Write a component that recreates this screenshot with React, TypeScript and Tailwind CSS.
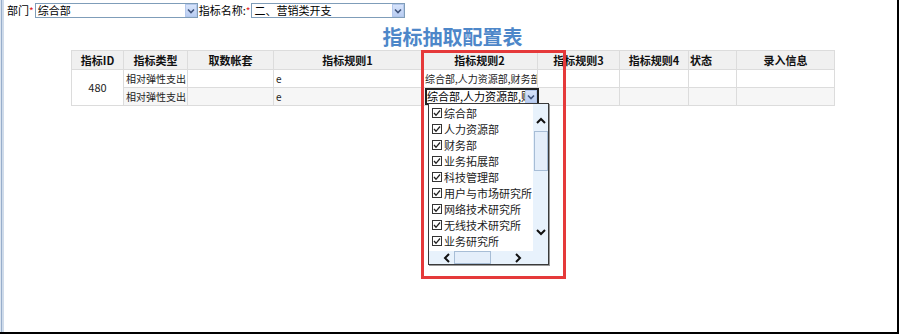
import type React from 'react';

const FONT = { fontFamily: '"Microsoft YaHei", "Noto Sans CJK SC", "Noto Sans", sans-serif' };

// 下拉箭头按钮（仿 XP 风格）
const ArrowBtn: React.FC<{ className?: string }> = ({ className = '' }) => (
  <div
    className={`flex items-center justify-center w-[12px] h-full border border-[#b4c8ec] bg-gradient-to-b from-[#d7e4fb] to-[#b9cdf2] ${className}`}
  >
    <svg width="8" height="6" viewBox="0 0 8 6">
      <polyline points="1,1.5 4,4.5 7,1.5" fill="none" stroke="#3f527a" strokeWidth="1.6" />
    </svg>
  </div>
);

const Chevron: React.FC<{ dir: 'up' | 'down' | 'left' | 'right' }> = ({ dir }) => {
  const pts = {
    up: '1,6 5,2 9,6',
    down: '1,2 5,6 9,2',
    left: '6,1 2,5 6,9',
    right: '2,1 6,5 2,9',
  }[dir];
  const vertical = dir === 'up' || dir === 'down';
  return (
    <svg width={vertical ? 10 : 8} height={vertical ? 8 : 10} viewBox={vertical ? '0 0 10 8' : '0 0 8 10'}>
      <polyline points={pts} fill="none" stroke="#111" strokeWidth="2" />
    </svg>
  );
};

const TopSelect: React.FC<{ value: string; width: string }> = ({ value, width }) => (
  <div className={`flex h-[15px] ${width} border border-[#7f9db9] bg-white`}>
    <span className="flex-1 flex items-center pl-[2px] text-[11px] leading-none text-black overflow-hidden whitespace-nowrap">
      {value}
    </span>
    <ArrowBtn />
  </div>
);

const departments = [
  '综合部',
  '人力资源部',
  '财务部',
  '业务拓展部',
  '科技管理部',
  '用户与市场研究所',
  '网络技术研究所',
  '无线技术研究所',
  '业务研究所',
];

const CheckBox: React.FC = () => (
  <div className="w-[10px] h-[10px] border border-[#333] bg-white flex items-center justify-center">
    <svg width="8" height="8" viewBox="0 0 8 8">
      <polyline points="1,4 3,6.3 7,1.5" fill="none" stroke="#222" strokeWidth="1.3" />
    </svg>
  </div>
);

// 多选下拉列表（展开状态）
const DeptDropdown: React.FC = () => (
  <div className="absolute left-[3px] top-[15px] w-[121px] h-[162px] border border-[#3a3a3a] bg-white flex flex-col shadow-[1px_1px_0_#9a9a9a] z-10">
    <div className="flex flex-1 min-h-0">
      <div className="flex-1 pt-[1px] overflow-hidden">
        {departments.map(d => (
          <div key={d} className="flex items-center h-[16px] pl-[3px] gap-[2px]">
            <CheckBox />
            <span className="text-[11px] leading-[16px] text-[#222] whitespace-nowrap">{d}</span>
          </div>
        ))}
      </div>
      <div className="w-[15px] bg-[#e8f2fc] flex flex-col items-center">
        <div className="h-[27px] w-full flex items-end justify-center pb-[6px]">
          <Chevron dir="up" />
        </div>
        <div className="h-[40px] w-[14px] border border-[#a7bdd6] bg-[#e4eefa]" />
        <div className="flex-1" />
        <div className="h-[24px] w-full flex items-center justify-center mb-[7px]">
          <Chevron dir="down" />
        </div>
      </div>
    </div>
    <div className="h-[13px] bg-[#e8f2fc] flex items-center">
      <div className="w-[14px]" />
      <Chevron dir="left" />
      <div className="ml-[3px] w-[37px] h-[13px] border border-[#a7bdd6] bg-[#e4eefa]" />
      <div className="w-[23px]" />
      <Chevron dir="right" />
    </div>
  </div>
);

const cols = [52, 64, 86, 148, 116, 82, 69, 48, 98];
const headers = ['指标ID', '指标类型', '取数帐套', '指标规则1', '指标规则2', '指标规则3', '指标规则4', '状态', '录入信息'];

const App: React.FC = () => {
  const cell = 'border border-[#dcdcdc] px-[2px] text-[10px] text-[#222] whitespace-nowrap overflow-hidden';

  return (
    <div className="w-[904px] h-[335px] bg-white" style={FONT}>
      <div className="w-[899px] h-[334px] border-r-2 border-b-2 border-black flex">
        {/* 左侧边框 */}
        <div className="w-[1px] bg-[#dbe4ef]" />
        <div className="w-[1px] bg-[#98aecb]" />
        <div className="w-[2px] bg-[#cfdbea]" />

        <div className="flex-1 relative">
          {/* 查询条件 */}
          <div className="flex items-center h-[15px] mt-[3px] pl-[3px] text-[11px] text-black">
            <span>部门</span>
            <span className="text-[#e02020] text-[10px] mr-[1px] self-start">*</span>
            <TopSelect value="综合部" width="w-[163px]" />
            <span className="ml-[1px]">指标名称:</span>
            <span className="text-[#e02020] text-[10px] mr-[1px] self-start">*</span>
            <TopSelect value="二、营销类开支" width="w-[154px]" />
          </div>

          <div className="ml-[67px] w-[763px]">
            <div className="mt-[6px] h-[26px] text-center text-[20px] leading-[26px] font-bold text-[#4d87c9]">
              指标抽取配置表
            </div>

            <table className="table-fixed border-collapse w-[763px]">
              <colgroup>
                {cols.map((w, i) => (
                  <col key={i} style={{ width: w }} />
                ))}
              </colgroup>
              <thead>
                <tr className="h-[19px] bg-[#f0f0f0]">
                  {headers.map(h => (
                    <th
                      key={h}
                      className={`border border-[#dcdcdc] text-[11px] font-bold text-[#111] p-0 ${
                        h === '状态' ? 'text-left pl-[1px]' : 'text-center'
                      }`}
                    >
                      {h}
                    </th>
                  ))}
                </tr>
              </thead>
              <tbody>
                <tr className="h-[18px] bg-white">
                  <td rowSpan={2} className={`${cell} text-center text-[11px] bg-white`}>
                    480
                  </td>
                  <td className={cell}>相对弹性支出</td>
                  <td className={cell} />
                  <td className={cell}>e</td>
                  <td className={`${cell} pl-[3px] pr-0`}>综合部,人力资源部,财务部</td>
                  <td className={cell} />
                  <td className={cell} />
                  <td className={cell} />
                  <td className={cell} />
                </tr>
                <tr className="h-[17px] bg-[#f6f6f6]">
                  <td className={cell}>相对弹性支出</td>
                  <td className={cell} />
                  <td className={cell}>e</td>
                  <td className="border border-[#dcdcdc] p-0 overflow-visible">
                    <div className="relative ml-[3px]">
                      <div className="flex h-[17px] w-[114px] border-2 border-[#222] bg-white">
                        <span className="flex-1 flex items-center text-[11px] leading-none text-black overflow-hidden whitespace-nowrap">
                          综合部,人力资源部,财务部
                        </span>
                        <ArrowBtn />
                      </div>
                      <DeptDropdown />
                    </div>
                  </td>
                  <td className={cell} />
                  <td className={cell} />
                  <td className={cell} />
                  <td className={cell} />
                </tr>
              </tbody>
            </table>
          </div>

          {/* 红色标注框 */}
          <div className="absolute left-[417px] top-[50px] w-[145px] h-[229px] border-[3px] border-[#e5393a] pointer-events-none z-20" />
        </div>
      </div>
    </div>
  );
};

export default App;
